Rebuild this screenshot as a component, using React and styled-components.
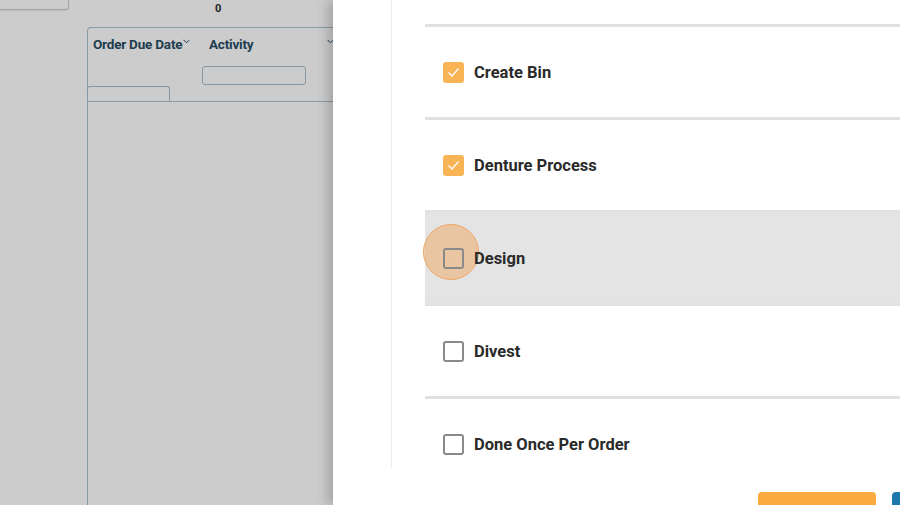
import React from 'react'
import styled, { createGlobalStyle } from 'styled-components'

const GlobalStyle = createGlobalStyle`
  html, body {
    margin: 0;
    padding: 0;
    overflow: hidden;
    background: #ffffff;
    font-family: Roboto, "Liberation Sans", Arial, sans-serif;
  }
`

const Page = styled.div`
  width: 900px;
  height: 505px;
  display: flex;
  flex-direction: column;
  background: #ffffff;
`

const TopBar = styled.div`
  display: flex;
  align-items: flex-start;
  height: 27px;
`

const SearchBox = styled.div`
  width: 68px;
  height: 28px;
  margin-top: -19px;
  border: 1px solid #cfcfcf;
  border-top: none;
  border-left: none;
  border-radius: 0 0 3px 0;
  box-shadow: 0 1px 1px rgba(0, 0, 0, 0.08);
`

const Count = styled.span`
  margin-left: 146px;
  margin-top: 2px;
  font-size: 11px;
  font-weight: 700;
  color: #1f2a30;
`

const Table = styled.div`
  flex: 1;
  margin-left: 87px;
  border: 1px solid #aec3cf;
  border-right: none;
  border-bottom: none;
  border-radius: 4px 0 0 0;
  display: flex;
  flex-direction: column;
`

const HeaderRow = styled.div`
  display: flex;
  height: 73px;
  border-bottom: 1px solid #aec3cf;
`

const HeaderCol = styled.div`
  width: ${p => p.width}px;
  display: flex;
  flex-direction: column;
  justify-content: space-between;
`

const HeaderTitle = styled.div`
  display: flex;
  align-items: flex-start;
  padding: 8px 0 0 ${p => p.pad}px;
  font-size: 13.5px;
  font-weight: 700;
  color: #274d63;
  letter-spacing: -0.2px;
`

const Chevron = styled.svg`
  margin-left: ${p => p.gap}px;
  margin-top: 3px;
`

const FilterInput = styled.div`
  width: 102px;
  height: 17px;
  margin: 0 0 16px -1px;
  border: 1px solid #a9bfcc;
  border-radius: 3px;
`

const FilterTab = styled.div`
  width: 81px;
  height: 14px;
  margin-left: -1px;
  border: 1px solid #a9bfcc;
  border-bottom: none;
  border-radius: 3px 3px 0 0;
`

const Backdrop = styled.div`
  position: fixed;
  inset: 0;
  background: rgba(0, 0, 0, 0.2);
`

const Drawer = styled.div`
  position: fixed;
  top: 0;
  left: 333px;
  width: 697px;
  height: 505px;
  background: #ffffff;
  box-shadow: -5px 0 12px rgba(0, 0, 0, 0.22);
  display: flex;
  flex-direction: column;
`

const Body = styled.div`
  display: flex;
  height: 468px;
`

const Rail = styled.div`
  width: 58px;
  border-right: 1px solid #ececec;
`

const List = styled.div`
  flex: 1;
  padding: 24px 0 0 33px;
  overflow: hidden;
`

const Row = styled.div`
  display: flex;
  align-items: center;
  height: 90px;
  padding-left: 18px;
  border-top: 3px solid #e1e1e1;
  background: ${p => (p.hover ? '#e4e4e4' : '#ffffff')};
  border-bottom: ${p => (p.hover ? '1px solid #d2d2d2' : 'none')};
  margin-bottom: ${p => (p.hover ? '-1px' : '0')};
  position: relative;
`

const BoxWrap = styled.div`
  position: relative;
  width: 21px;
  height: 21px;
  margin-top: ${p => p.shift}px;
`

const Box = styled.div`
  position: relative;
  width: 21px;
  height: 21px;
  box-sizing: border-box;
  border-radius: 3px;
  background: ${p => (p.checked ? '#f9b456' : 'transparent')};
  border: ${p => (p.checked ? 'none' : '2px solid #8a8a8a')};
  display: flex;
  align-items: center;
  justify-content: center;
  z-index: 1;
`

const Ripple = styled.div`
  position: absolute;
  left: -20px;
  top: -24px;
  width: 56px;
  height: 56px;
  border-radius: 50%;
  background: rgba(244, 156, 72, 0.42);
  border: 1.5px solid #eea462;
  box-sizing: border-box;
`

const Label = styled.span`
  margin-left: 10px;
  margin-top: 1px;
  font-size: 16.5px;
  font-weight: 700;
  color: #2a2a2a;
  position: relative;
  z-index: 1;
`

const Footer = styled.div`
  display: flex;
  justify-content: flex-end;
  gap: 16px;
  padding: 24px 20px 0 0;
`

const Button = styled.button`
  width: 118px;
  height: 36px;
  border: none;
  border-radius: 4px;
  background: ${p => p.color};
`

const rows = [
  { label: 'Create Bin', checked: true },
  { label: 'Denture Process', checked: true },
  { label: 'Design', checked: false, hover: true },
  { label: 'Divest', checked: false },
  { label: 'Done Once Per Order', checked: false },
]

const ChevronIcon = ({ gap }) => (
  <Chevron gap={gap} width="7" height="5" viewBox="0 0 7 5">
    <polyline points="0.5,0.8 3.5,3.8 6.5,0.8" fill="none" stroke="#274d63" strokeWidth="1" />
  </Chevron>
)

const Checkbox = ({ checked, hover }) => (
  <BoxWrap shift={hover ? 1 : 0}>
    {hover && <Ripple />}
    <Box checked={checked}>
      {checked && (
        <svg width="15" height="15" viewBox="0 0 15 15">
          <polyline points="2.5,7.5 6,11 12.5,3.5" fill="none" stroke="#ffffff" strokeWidth="1.3" />
        </svg>
      )}
    </Box>
  </BoxWrap>
)

export default function App() {
  return (
    <>
      <GlobalStyle />
      <Page>
        <TopBar>
          <SearchBox />
          <Count>0</Count>
        </TopBar>
        <Table>
          <HeaderRow>
            <HeaderCol width={115}>
              <HeaderTitle pad={5}>
                Order Due Date
                <ChevronIcon gap={1} />
              </HeaderTitle>
              <FilterTab />
            </HeaderCol>
            <HeaderCol width={140}>
              <HeaderTitle pad={6}>
                Activity
                <ChevronIcon gap={74} />
              </HeaderTitle>
              <FilterInput />
            </HeaderCol>
          </HeaderRow>
        </Table>
      </Page>
      <Backdrop />
      <Drawer>
        <Body>
          <Rail />
          <List>
            {rows.map(r => (
              <Row key={r.label} hover={r.hover}>
                <Checkbox checked={r.checked} hover={r.hover} />
                <Label>{r.label}</Label>
              </Row>
            ))}
          </List>
        </Body>
        <Footer>
          <Button color="#fbab3e" aria-label="Cancel" />
          <Button color="#1c78ae" aria-label="Save" />
        </Footer>
      </Drawer>
    </>
  )
}
